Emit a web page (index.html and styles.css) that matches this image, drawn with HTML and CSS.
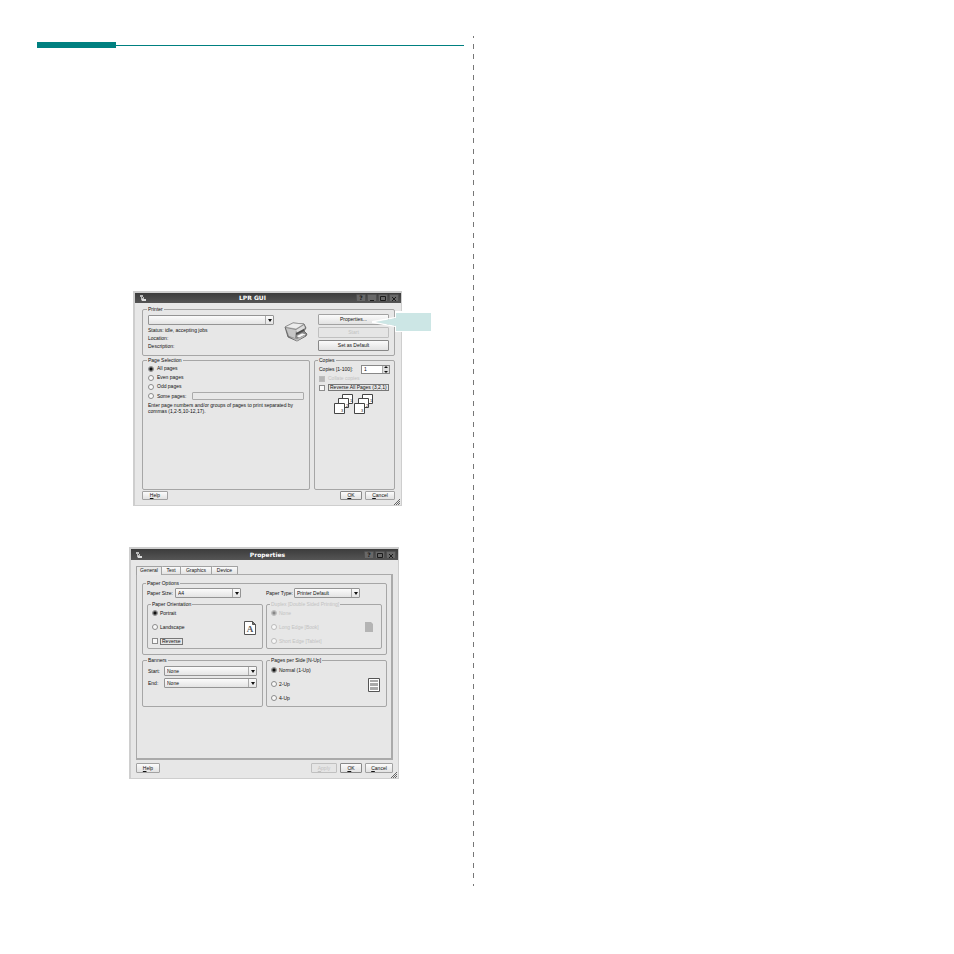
FILE: index.html
```html
<!DOCTYPE html>
<html lang="en">
<head>
<meta charset="utf-8">
<title>LPR GUI</title>
<link rel="stylesheet" href="styles.css">
</head>
<body>
<main class="page">
  <section class="column">
    <div class="rule"></div>

    <form class="window window-print">
      <header class="titlebar">
        <svg class="app-icon" viewBox="0 0 8 8"><path d="M1 1h3v2h1v2H2V3H1z" fill="#bbb"/><path d="M2 5h5v2H3z" fill="#ddd"/><path d="M3 3h1v1H3z" fill="#555"/></svg>
        <h2>LPR GUI</h2>
        <div class="controls">
          <button type="button">?</button>
          <button type="button" aria-label="Minimize"><svg viewBox="0 0 8 8"><path d="M2 5.5h4"/></svg></button>
          <button type="button" aria-label="Maximize"><svg viewBox="0 0 8 8"><path d="M1.500 1.500h5v4h-5z"/></svg></button>
          <button type="button" aria-label="Close"><svg viewBox="0 0 8 8"><path d="M2 2l4 4M6 2L2 6"/></svg></button>
        </div>
      </header>
      <div class="body">
        <fieldset class="printer">
          <legend>Printer</legend>
          <div class="printer-grid">
            <div class="printer-info">
              <span class="combo"><select aria-label="Printer"><option></option></select></span>
              <p>Status: idle, accepting jobs</p>
              <p>Location:</p>
              <p>Description:</p>
            </div>
            <svg class="printer-icon" viewBox="0 0 24 20">
              <path d="M1 5l8-4 11 1 2 4-2 3 3 3-1 2-9 5-9-4z" fill="#8a8a8a" stroke="#555" stroke-width=".8"/>
              <path d="M1 5l8-4 11 1-8 5z" fill="#ececec" stroke="#888" stroke-width=".5"/>
              <path d="M2 6l10 2-1 8-6-2z" fill="#c6c6c6"/>
              <path d="M12 8l8-5 1 3-8 5z" fill="#dcdcdc"/>
              <path d="M12 11l8-4v2l-8 4z" fill="#4c4c4c"/>
              <path d="M12 14l6-3 5 1-8 4z" fill="#f6f6f6" stroke="#555" stroke-width=".5"/>
              <path d="M6 15l7 2 8-4v1l-8 5z" fill="#b8b8b8"/>
            </svg>
            <div class="printer-actions">
              <button type="button">Properties...</button>
              <button type="button" disabled>Start</button>
              <button type="button" class="strong">Set as Default</button>
              <svg class="callout" viewBox="0 0 60 24"><path d="M24 2h36v2H26v5L4 13l22 4v5h34v1H24v-5L1 14v-2l23-4z" fill="#fff"/><path d="M25 4h35v18H25v-5L5 13l20-4z" fill="#cce6e5"/></svg>
            </div>
          </div>
        </fieldset>
        <div class="print-split">
          <fieldset class="selection">
            <legend>Page Selection</legend>
            <label class="choice"><input type="radio" name="pages" checked>All pages</label>
            <label class="choice"><input type="radio" name="pages">Even pages</label>
            <label class="choice"><input type="radio" name="pages">Odd pages</label>
            <div class="some">
              <label class="choice"><input type="radio" name="pages">Some pages:</label>
              <input class="text" type="text" aria-label="Page range" disabled>
            </div>
            <p class="hint">Enter page numbers and/or groups of pages to print separated by<br>commas (1,2-5,10-12,17).</p>
          </fieldset>
          <fieldset class="copies">
            <legend>Copies</legend>
            <div class="count">
              <label for="count">Copies [1-100]:</label>
              <span class="spin"><input id="count" type="text" value="1"></span>
            </div>
            <label class="choice off"><input type="checkbox" checked disabled>Collate copies</label>
            <label class="choice"><input type="checkbox"><span class="focus">Reverse All Pages (3,2,1)</span></label>
            <svg class="stack" viewBox="0 0 40 20">
              <g fill="#fff" stroke="#444">
                <path d="M8.500 .5h10v9h-10z"/><path d="M4.500 4.500h10v9h-10z"/><path d="M.5 9.500h10v10H.5z"/>
                <path d="M28.500 .5h10v9h-10z"/><path d="M24.500 4.500h10v9h-10z"/><path d="M20.500 9.500h10v10h-10z"/>
              </g>
              <g class="stack-text"><text x="16" y="8">1</text><text x="12" y="13">2</text><text x="7" y="18">3</text><text x="36" y="8">1</text><text x="32" y="13">2</text><text x="27" y="18">3</text></g>
            </svg>
          </fieldset>
        </div>
        <footer class="actions">
          <button type="button" class="help"><u>H</u>elp</button>
          <button type="button" class="ok strong"><u>O</u>K</button>
          <button type="button" class="cancel"><u>C</u>ancel</button>
        </footer>
      </div>
      <svg class="grip" viewBox="0 0 6 6"><path d="M0 6l6-6M2 6l4-4M4 6l2-2"/></svg>
    </form>

    <form class="window window-props">
      <header class="titlebar">
        <svg class="app-icon" viewBox="0 0 8 8"><path d="M1 1h3v2h1v2H2V3H1z" fill="#bbb"/><path d="M2 5h5v2H3z" fill="#ddd"/><path d="M3 3h1v1H3z" fill="#555"/></svg>
        <h2>Properties</h2>
        <div class="controls">
          <button type="button">?</button>
          <button type="button" aria-label="Maximize"><svg viewBox="0 0 8 8"><path d="M1.500 1.500h5v4h-5z"/></svg></button>
          <button type="button" aria-label="Close"><svg viewBox="0 0 8 8"><path d="M2 2l4 4M6 2L2 6"/></svg></button>
        </div>
      </header>
      <div class="body">
        <nav class="tabs">
          <button type="button" class="tab active">General</button>
          <button type="button" class="tab">Text</button>
          <button type="button" class="tab wide">Graphics</button>
          <button type="button" class="tab">Device</button>
        </nav>
        <div class="panel">
          <fieldset class="paper">
            <legend>Paper Options</legend>
            <div class="halves">
              <div class="field"><label for="size">Paper Size:</label><span class="combo"><select id="size"><option>A4</option></select></span></div>
              <div class="field"><label for="type">Paper Type:</label><span class="combo"><select id="type"><option>Printer Default</option></select></span></div>
            </div>
            <div class="halves">
              <fieldset class="inner">
                <legend>Paper Orientation</legend>
                <div class="choices">
                  <label class="choice"><input type="radio" name="orient" checked>Portrait</label>
                  <label class="choice"><input type="radio" name="orient">Landscape</label>
                  <label class="choice"><input type="checkbox"><span class="focus">Reverse</span></label>
                </div>
                <svg class="sheet" viewBox="0 0 12 14"><path d="M.5 .5h8l3 3v10H.5z" fill="#fff" stroke="#555"/><path d="M8.500 .5v3h3z" fill="#777" stroke="#555"/><text class="sheet-letter" x="6" y="11">A</text></svg>
              </fieldset>
              <fieldset class="inner off" disabled>
                <legend>Duplex [Double Sided Printing]</legend>
                <div class="choices">
                  <label class="choice"><input type="radio" name="duplex" checked>None</label>
                  <label class="choice"><input type="radio" name="duplex">Long Edge [Book]</label>
                  <label class="choice"><input type="radio" name="duplex">Short Edge [Tablet]</label>
                </div>
                <svg class="sheet" viewBox="0 0 12 14"><path d="M2 1h6l2 2v8H2z" fill="#b4b4b4"/></svg>
              </fieldset>
            </div>
          </fieldset>
          <div class="halves lower">
            <fieldset class="banners">
              <legend>Banners</legend>
              <div class="field"><label for="start">Start:</label><span class="combo"><select id="start"><option>None</option></select></span></div>
              <div class="field"><label for="end">End:</label><span class="combo"><select id="end"><option>None</option></select></span></div>
            </fieldset>
            <fieldset class="inner nup">
              <legend>Pages per Side [N-Up]</legend>
              <div class="choices">
                <label class="choice"><input type="radio" name="nup" checked>Normal (1-Up)</label>
                <label class="choice"><input type="radio" name="nup">2-Up</label>
                <label class="choice"><input type="radio" name="nup">4-Up</label>
              </div>
              <svg class="sheet" viewBox="0 0 12 14"><path d="M.5 .5h11v13H.5z" fill="#fff" stroke="#555"/><path d="M2 2h8v2H2zM2 5h8v3H2zM2 9h8v3H2z" fill="#aaa"/></svg>
            </fieldset>
          </div>
        </div>
        <footer class="actions">
          <button type="button" class="help"><u>H</u>elp</button>
          <button type="button" class="apply" disabled><u>A</u>pply</button>
          <button type="button" class="ok strong"><u>O</u>K</button>
          <button type="button" class="cancel"><u>C</u>ancel</button>
        </footer>
      </div>
      <svg class="grip" viewBox="0 0 6 6"><path d="M0 6l6-6M2 6l4-4M4 6l2-2"/></svg>
    </form>
  </section>
  <div class="divider"></div>
  <section class="column"></section>
</main>
</body>
</html>
```
FILE: styles.css
```css
* { box-sizing: border-box; }
body { margin: 0; background: #fff; color: #111; font: 5px/7px "Liberation Sans", Arial, sans-serif; }
p, h2 { margin: 0; }
button, input, select { font: inherit; color: inherit; margin: 0; }

.page {
  display: grid;
  grid-template-columns: 1fr 1px 1fr;
  column-gap: 9px;
  min-height: 100vh;
  padding: 36px 44px 68px 37px;
}
.divider { background: repeating-linear-gradient(#777 0 2px, transparent 2px 8px, #777 8px 13px, transparent 13px 18px, #777 18px 21px); }
.rule {
  height: 6px;
  margin: 6px 0 243px;
  background: linear-gradient(#008080, #008080) 0 0 / 79px 6px no-repeat, linear-gradient(#008080, #008080) 0 3px / 100% 1px no-repeat;
}

/* Windows */
.window { position: relative; background: #e7e7e7; border: solid #cecece; border-width: 2px 1px 1px 2px; }
.window-print { margin: 0 62px 41px 96px; }
.window-props { margin: 0 65px 0 92px; }
.titlebar { display: flex; align-items: center; height: 10px; padding: 0 2px; background: linear-gradient(#3c3c3c, #555); color: #fff; }
.window-props .titlebar { height: 11px; }
.titlebar h2 { flex: 1; text-align: center; font: bold 6px/8px "DejaVu Sans", sans-serif; }
.app-icon { width: 8px; height: 8px; margin: 0 2px; }
.window-props .app-icon { margin-right: 28px; }
.controls { display: flex; gap: 1px; }
.controls button { display: grid; place-items: center; width: 10px; height: 8px; padding: 0; border: 1px solid #505050; background: #686868; color: #1c1c1c; font: bold 6px/6px "DejaVu Sans", sans-serif; }
.controls svg { width: 8px; height: 8px; fill: none; stroke: #1c1c1c; }
.grip { position: absolute; right: 1px; bottom: 0; width: 6px; height: 6px; stroke: #666; fill: none; }
.body { padding: 3px 6px 5px 7px; }

/* Groups */
fieldset { min-width: 0; margin: 0; padding: 0 5px; border: 1px solid #a6a6a6; border-radius: 2px; }
legend { margin-left: -1px; padding: 0 1px; line-height: 7px; }
.off, .off legend { color: #c2c2c2; }

/* Controls */
button { background: linear-gradient(#fbfbfb, #e2e2e2); border: 1px solid #a2a2a2; border-radius: 1px; padding: 0; text-align: center; }
button.strong { border-color: #888; }
button:disabled { color: #c2c2c2; border-color: #c0c0c0; background: #e5e5e5; }
.combo { position: relative; display: block; }
.combo select { display: block; width: 100%; height: 10px; padding: 0 12px 0 2px; appearance: none; border: 1px solid #949494; border-radius: 1px; background: linear-gradient(#fbfbfb, #e4e4e4); line-height: 8px; }
.combo::before { content: ""; position: absolute; right: 8px; top: 1px; bottom: 1px; border-left: 1px solid #aaa; pointer-events: none; }
.combo::after { content: ""; position: absolute; right: 2px; top: 4px; border: 2px solid transparent; border-top: 3px solid #111; border-bottom: 0; pointer-events: none; }
.choice { display: flex; align-items: center; gap: 2px; white-space: nowrap; }
.choice input { appearance: none; flex: none; width: 6px; height: 6px; border: 1px solid #8c8c8c; background: #f8f8f8; }
.choice input[type="radio"] { border-radius: 50%; }
.choice input[type="radio"]:checked { background: radial-gradient(#111 0 1px, #777 2px, #f0f0f0 3px); }
.choice input:disabled { border-color: #bbb; }
.choice input[type="radio"]:disabled:checked { background: radial-gradient(#888 0 1px, #bbb 2px, #eee 3px); }
.choice input[type="checkbox"]:disabled { background: #b5b5b5; }
.focus { border: 1px solid #777; padding: 0 1px; line-height: 5px; }

/* Print window */
.printer { height: 50px; }
.printer-grid { display: grid; grid-template-columns: 126px 24px 71px; justify-content: space-between; }
.printer-info { padding-top: 2px; }
.printer-info p { line-height: 8px; }
.printer-info .combo { margin-bottom: 1px; }
.printer-icon { width: 24px; height: 20px; margin-top: 9px; }
.printer-actions { position: relative; display: grid; gap: 2px; padding-top: 1px; align-content: start; }
.printer-actions button { height: 11px; }
.callout { position: absolute; left: 53px; top: -4px; width: 60px; height: 24px; }
.print-split { display: grid; grid-template-columns: 168px 1fr; gap: 4px; margin-top: 1px; }
.print-split fieldset { height: 133px; }
.selection .choice { height: 9px; gap: 3px; }
.some { display: grid; grid-template-columns: auto 112px; justify-content: space-between; align-items: center; height: 10px; }
.text { width: 100%; height: 8px; padding: 0 2px; border: 1px solid #aaa; border-radius: 1px; background: #e8e8e8; }
.hint { margin-top: 1px; line-height: 6px; white-space: nowrap; }
.copies { padding: 0 4px; }
.count { display: flex; align-items: center; justify-content: space-between; height: 10px; white-space: nowrap; }
.spin { position: relative; width: 29px; }
.spin input { display: block; width: 100%; height: 9px; padding: 0 9px 0 2px; border: 1px solid #888; background: linear-gradient(90deg, #fff 75%, #aaa 75% 78%, #ddd 78%); }
.spin::before, .spin::after { content: ""; position: absolute; right: 2px; border: 2px solid transparent; }
.spin::before { top: 1px; border-bottom-color: #111; border-top: 0; }
.spin::after { bottom: 1px; border-top-color: #111; border-bottom: 0; }
.copies .choice { height: 9px; gap: 3px; }
.stack { display: block; width: 40px; height: 20px; margin: 2px auto 0 15px; }
.stack-text { font-size: 4px; fill: #222; }

.actions { display: flex; gap: 3px; margin-top: 1px; }
.actions button { height: 9px; line-height: 7px; }
.help { width: 26px; margin-right: auto; }
.apply { width: 26px; }
.ok { width: 22px; }
.cancel { width: 30px; }

/* Properties window */
.window-props .body { padding: 6px 5px 5px 5px; }
.tabs { display: flex; align-items: flex-end; }
.tab { flex: none; width: 26px; height: 8px; border-bottom: 0; border-left: 0; border-radius: 1px 1px 0 0; }
.tab:nth-child(2) { width: 19px; }
.tab.wide { width: 31px; }
.tab.active { position: relative; height: 9px; margin-bottom: -1px; padding-bottom: 1px; border-left: 1px solid #a2a2a2; background: #e9e9e9; }
.panel { height: 186px; padding: 5px 4px 0 5px; border: 1px solid #aaa; border-right-width: 2px; border-bottom-width: 2px; }
.paper { padding: 0 4px 5px; }
.halves { display: grid; grid-template-columns: 1fr 1fr; gap: 3px; }
.field { display: flex; align-items: center; gap: 1px; white-space: nowrap; }
.paper .field { margin: 1px 0 3px; }
.paper .field .combo { width: 66px; }
.paper .field label { width: 27px; }
.inner { position: relative; display: flex; align-items: center; justify-content: space-between; padding: 0 6px 0 4px; }
.choices { display: grid; }
.choices .choice { height: 14px; }
.paper .choices { margin: -2px 0 0; }
.sheet { flex: none; width: 12px; height: 14px; }
.sheet-letter { font: bold 9px "Liberation Serif", serif; text-anchor: middle; fill: #555; }
.lower { margin-top: 2px; }
.lower fieldset { height: 50px; }
.nup .choices { margin-top: -2px; }
.banners .field { margin: 2px 0; }
.banners .combo { flex: 1; }
.banners .field label { width: 15px; }
.window-props .actions { margin-top: 3px; }
.window-props .actions button { height: 10px; }
.window-props .help { width: 24px; }
.window-props .cancel { width: 28px; }
```
